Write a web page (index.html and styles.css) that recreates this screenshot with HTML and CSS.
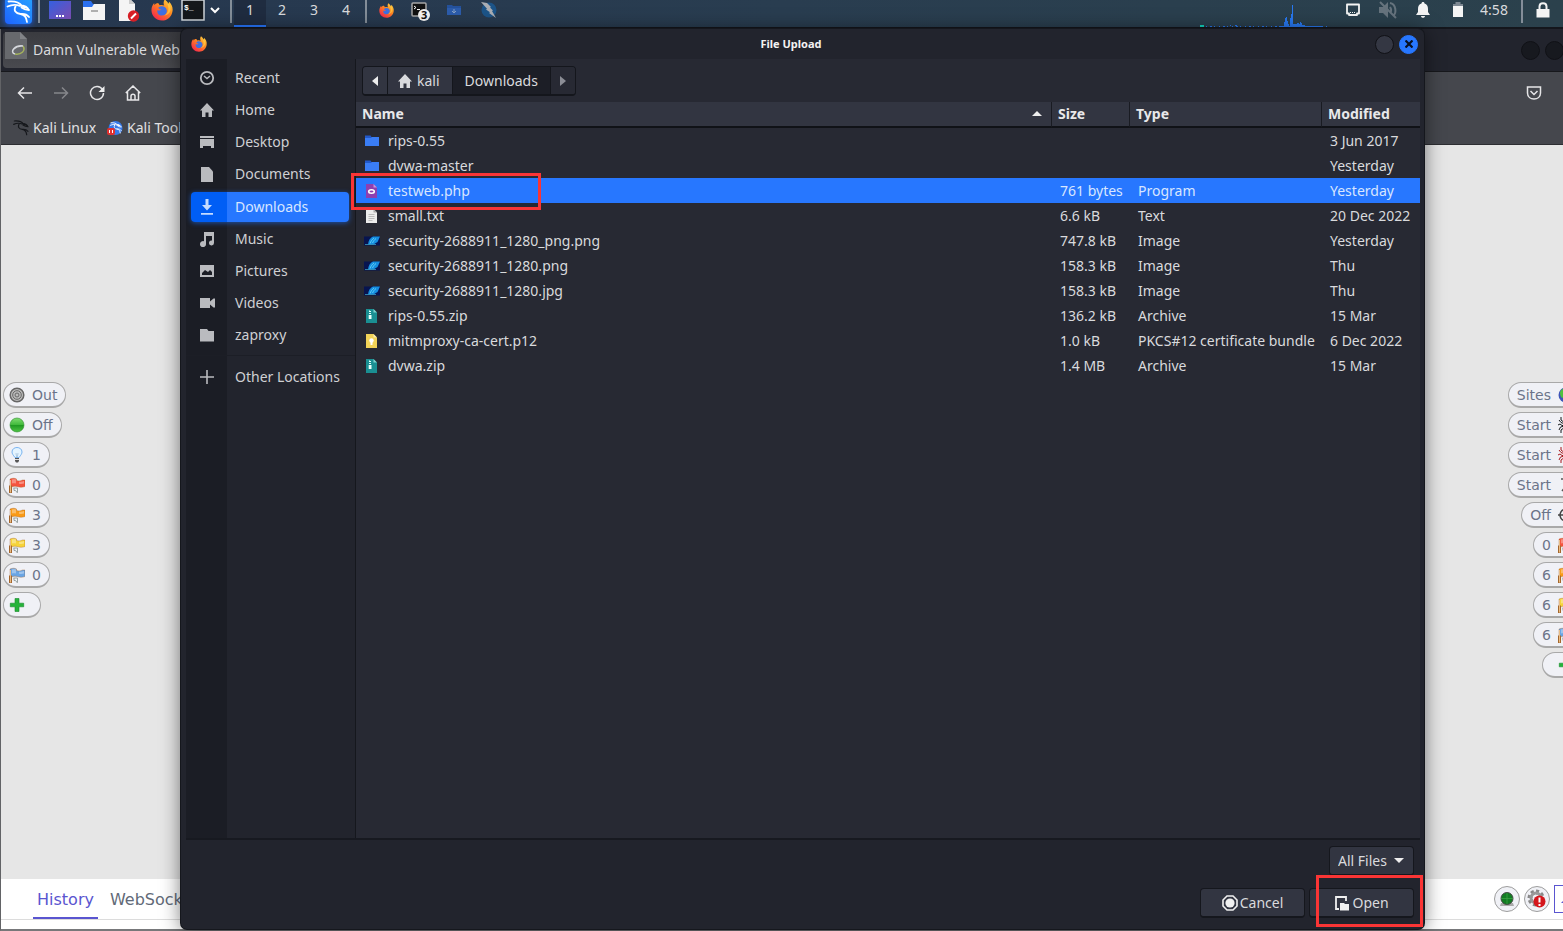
FILE: index.html
```html
<!DOCTYPE html>
<html lang="en">
<head>
<meta charset="utf-8">
<title>File Upload</title>
<link rel="stylesheet" href="styles.css">
</head>
<body>
<svg class="defs" aria-hidden="true">
  <defs>
    <linearGradient id="gFox" x1="1" y1="0" x2="0.2" y2="1"><stop offset="0" stop-color="#ffe14a"/><stop offset=".45" stop-color="#ff8a1f"/><stop offset="1" stop-color="#f5224f"/></linearGradient>
    <linearGradient id="gDesk" x1="0" y1="0" x2="1" y2="1"><stop offset="0" stop-color="#3560e0"/><stop offset="1" stop-color="#7a4bb0"/></linearGradient>
    <linearGradient id="gKali" x1="0" y1="1" x2="1" y2="0"><stop offset="0" stop-color="#1e63ff"/><stop offset="1" stop-color="#25a2ff"/></linearGradient>
    <linearGradient id="gGreen" x1="0" y1="0" x2="0" y2="1"><stop offset="0" stop-color="#7fdc70"/><stop offset=".5" stop-color="#3fb83a"/><stop offset=".52" stop-color="#1f9a22"/><stop offset="1" stop-color="#4fc445"/></linearGradient>
  </defs>
  <symbol id="firefox" viewBox="0 0 24 24">
    <path fill="url(#gFox)" d="M15 .5c2 1.400 3.200 3 3.500 5 1-.7 1.200-1.800 1-2.700C22.500 5.500 24 9 23.500 13 22.700 19.300 18 23.500 12 23.500 5.500 23.500.6 18.500.5 12.300.5 9 1.700 6.300 3.500 4.400c0 1 .1 1.600.5 2.200C5 5.200 6.500 4.400 8 4.500L9.500 6.800c1.500-.6 3.500-.5 5 .4C13.300 5 13.600 2.300 15 .5z"/>
    <path fill="#3f6fe0" d="M8 9.500c1.500-1.800 5-2.300 7.300-.6 2.700 2 2.600 6 .2 7.900-2.500 2-6.500 1.600-8-1-.8-1.400-.7-2.600-.2-3.800 1.200 1 2.800.6 4.200-.5-1.500.3-3-.6-3.500-2z"/>
    <path fill="#ffd24a" d="M15 1c2 2 3.500 4 3.500 7 1.500 4-.5 8-4 10 5-.5 8-5 6.500-10C19.500 4 17 3 15 1z" opacity=".65"/>
  </symbol>
  <symbol id="dragon" viewBox="0 0 24 24">
    <path fill="none" stroke="currentColor" stroke-width="1.800" stroke-linecap="round" d="M2 1.500c6-.5 11 1 13.500 4.500M1 6.500c4.500-2 9-2 12.500-.5M9 6.500c-2 4 0 7 5 7.500 4 .5 6 3.500 6.500 8M15.500 6c2.500-.5 4.500.5 6 2.500M15 7.500c2 1.500 4 2.500 7.500 2.500M14 14c4-.5 6.500.5 8.500 3"/>
    <path fill="currentColor" d="M13 5l4-.3 5 4-5-.8z"/>
  </symbol>
  <symbol id="house" viewBox="0 0 16 16"><path fill="currentColor" d="M8 1L1 8.500h2V15h3.500v-4.500h3V15H13V8.500h2z"/></symbol>
  <symbol id="folder" viewBox="0 0 16 16"><path fill="#2258c8" d="M1 2.500h5.500l1 1.500H15v5H1z"/><path fill="#3a7df5" d="M1 5h6l1-1h7v9H1z"/></symbol>
  <symbol id="zip" viewBox="0 0 16 16"><path fill="#1a8f92" d="M2 1h7.500L13 4.500V15H2z"/><path fill="#7fd6d2" d="M9.500 1L13 4.500H9.500z"/><path fill="#e9fffb" d="M5 2h1v1h1v1H6v1h1v1H6v1h1.500v4H4.700V7H6V6H5V5h1V4H5V3h1z"/></symbol>
  <symbol id="photo" viewBox="0 0 16 16"><path fill="#071450" d="M0 3.500h16v9H0z"/><path fill="#158de0" d="M4 11.500c.5-4 2-6.500 5-8h7L13.500 9l-4 2.500z"/><path stroke="#6fdcf8" stroke-width=".8" fill="none" d="M6 10.500C7 8 8 6.500 10 5M8.500 10c1-2 2-3.500 3.500-4.500"/><path stroke="#3a9dc4" stroke-width=".8" d="M1 11.500h11"/></symbol>
  <symbol id="flag" viewBox="0 0 16 16">
    <path fill="currentColor" stroke="rgba(150,70,0,.5)" stroke-width=".6" d="M1 2c2-1 5-1 6.500 0v1.500c2 .7 4 .5 6-.5H16v6.500c-2.500 1-5 1-7 .3-2-.8-4-.8-6 0H1z"/>
    <path fill="#fff" opacity=".35" d="M3 2.500c1.500-.5 3-.5 4 0v4c-1.500-.5-3-.4-4 0zM10 4.500c2 .4 3.500.2 5-.4v2.500c-2 .6-3.500.5-5 .2z"/>
    <path stroke="#a5672c" stroke-width="3" d="M1.500 8.500V16"/><path stroke="#e9bd86" d="M1.500 3v12.500"/>
    <path fill="none" stroke="#8f9b98" stroke-width=".9" d="M4.500 11h4v4.500M5 11v2.500h1.500l2 2.500"/>
  </symbol>
  <symbol id="plus" viewBox="0 0 16 16"><path fill="#25b33a" stroke="#148a28" stroke-width=".6" d="M6 1.500h4v4.700h4.700v3.600H10v4.700H6V9.800H1.300V6.200H6z"/></symbol>
  <symbol id="spider" viewBox="0 0 16 16"><ellipse cx="9" cy="8" rx="3" ry="4.500" fill="currentColor"/><path fill="none" stroke="currentColor" d="M3 0v3l4 3M1 3l2 2.500L7 7M0 8l2-1 2 1.500h3M1 13l1.500-3L7 9M3 16v-3l4-3M15 1l-2 2-5 3M15 14l-2-3-5-1"/></symbol>
</svg>

<header class="panel">
  <button class="kali" aria-label="Applications"><svg width="27" height="27" viewBox="0 0 27 27"><rect width="27" height="27" rx="4" fill="url(#gKali)"/><use href="#dragon" x="1" y="3" width="25" height="24"/></svg></button>
  <span class="sep"></span>
  <nav class="launchers">
    <button aria-label="Show desktop"><svg width="24" height="20" viewBox="0 0 24 20"><path fill="url(#gDesk)" d="M1 1h22v18H1z"/><path stroke="#fff" stroke-width="2" stroke-dasharray="2 1" d="M8 16h8"/></svg></button>
    <button aria-label="File manager"><svg width="24" height="24" viewBox="0 0 24 24"><path fill="#2b70ef" d="M1 3h8l2 3h12v5H1z"/><path fill="#f4f4f4" d="M1 9h9l2-3h11v16H1z"/><path stroke="#999" stroke-width="1.500" d="M9 13h7"/></svg></button>
    <button aria-label="Text editor"><svg width="24" height="24" viewBox="0 0 24 24"><path fill="#f4f4f4" d="M3 0h10l6 6v17H3z"/><path fill="#ccc" d="M13 0l6 6h-6z"/><circle cx="17.500" cy="18" r="5.700" fill="#d61f26"/><path stroke="#fff" stroke-width="2" d="M15 20.500l5-5"/></svg></button>
    <button aria-label="Firefox"><svg width="22" height="22"><use href="#firefox"/></svg></button>
    <button class="term" aria-label="Terminal"><svg width="24" height="22" viewBox="0 0 24 22"><path fill="#15181b" stroke="#cfd5da" stroke-width="1.500" d="M1 1h22v20H1z"/><text x="3" y="11" class="prompt">$_</text></svg></button>
    <button class="more" aria-label="More terminals"><svg width="10" height="8" viewBox="0 0 10 8"><path fill="none" stroke="#fff" stroke-width="2" d="M1 2l4 4 4-4"/></svg></button>
  </nav>
  <span class="sep"></span>
  <nav class="spaces"><button class="on">1</button><button>2</button><button>3</button><button>4</button></nav>
  <span class="sep"></span>
  <nav class="tasks">
    <button aria-label="Firefox window"><svg width="15" height="15"><use href="#firefox"/></svg></button>
    <button aria-label="Terminal windows"><svg width="20" height="22" viewBox="0 0 20 22"><rect x="2" y="4" width="14" height="13" rx="1" fill="#111" stroke="#a7a7a7" stroke-width="1.500"/><path fill="none" stroke="#fff" d="M4 7l2 1.500L4 10M7 10.500h3"/><circle cx="14" cy="16" r="6" fill="#f4f4f4"/><text x="11" y="20" class="count">3</text></svg></button>
    <button aria-label="Downloads folder"><svg width="16" height="14" viewBox="0 0 16 14"><path fill="#24519b" d="M1 2h5l1 1h8v9H1z"/><path fill="#2c5cab" d="M1 5h14v7H1z"/><path fill="none" stroke="#86a0c4" d="M8 6v4M6 8l2 2 2-2"/></svg></button>
    <button aria-label="ZAP"><svg width="17" height="18" viewBox="0 0 17 18"><circle cx="9" cy="9" r="7.500" fill="#1c5488"/><path fill="#a9adb3" d="M1 1l6 1 4 4-1 .5 3 3-1 .5 4 7-7-5 1-.8-4-2.700 1-.8z"/></svg></button>
  </nav>
  <div class="tray">
    <svg class="graph" width="132" height="27" viewBox="0 0 132 27"><path fill="#12d6c0" d="M5 25h4v2H5z"/><path stroke="#2878f0" stroke-width="1" stroke-dasharray="1 3 2 2 1 4" d="M11 26.500h76"/><path fill="#2878f0" d="M35 25h1v1h-1zM40 25h2v1h-2zM84 26h5v-4h1v-4h1v-1h1v4h1v3h1v2h1v-8h1v-4h1V5h1v19h4v-1h2v1h1v-2h1v1h1v2h3v1h18v1H84zM131 26h1v1h-1z"/></svg>
    <button aria-label="Network"><svg width="16" height="14" viewBox="0 0 16 14"><path fill="none" stroke="#f4f4f4" stroke-width="1.800" stroke-linejoin="round" d="M2 1.500h12v9h-2V12H4v-1.500H2z"/><path stroke="#f4f4f4" stroke-dasharray="1 1" d="M5 9.500h6"/></svg></button>
    <button aria-label="Sound muted"><svg width="20" height="18" viewBox="0 0 20 18"><g stroke="#66737d" fill="none" stroke-width="2"><path fill="#66737d" stroke="none" d="M1 6h4l5-5v16l-5-5H1z"/><path d="M12 6c1.500 2 1.500 4 0 6M12 2c6 1 7 10 3 13M2 1l16 16"/></g></svg></button>
    <button aria-label="Notifications"><svg width="16" height="16" viewBox="0 0 16 16"><path fill="#f4f4f4" d="M8 0c1 0 1.500.6 1.500 1.500C12 2.200 13 4 13 7v3l2 3H1l2-3V7c0-3 1-4.800 3.500-5.500C6.500.6 7 0 8 0zM6 14h4c0 1-.8 1.800-2 1.800S6 15 6 14z"/></svg></button>
    <button aria-label="Battery"><svg width="12" height="16" viewBox="0 0 12 16"><path fill="#7c8791" d="M3.500 0h5v2H11v3H1V2h2.500z"/><path fill="#f4f4f4" d="M1 4h10v11H1z"/></svg></button>
    <time>4:58</time>
    <span class="sep"></span>
    <button class="lock" aria-label="Lock"><svg width="14" height="16" viewBox="0 0 14 16"><path fill="#f4f4f4" d="M.5 7h13v8.500H.5z"/><path fill="none" stroke="#f4f4f4" stroke-width="2" d="M3.500 8V4.500c0-4.500 7-4.500 7 0V8"/></svg></button>
  </div>
</header>

<main class="browser">
  <div class="tabs">
    <div class="tab"><svg width="24" height="30" viewBox="0 0 24 30"><path fill="#67696d" d="M0 0h15l7 7v20H0z"/><path fill="#818387" d="M15 0l7 7h-7z"/><path fill="none" stroke="#a3b25c" stroke-width="1.500" d="M18 14c3 5-2 9-8 8"/><path fill="none" stroke="#d5d8dc" stroke-width="1.500" d="M10 22c-6-2 0-9 8-8"/></svg>Damn Vulnerable Web</div>
    <div class="wm"><button aria-label="Minimize"></button><button aria-label="Maximize"></button></div>
  </div>
  <div class="toolbar">
    <div class="nav">
      <button aria-label="Back"><svg viewBox="0 0 16 16"><path d="M15 8H2M7 2.500L1.500 8 7 13.500"/></svg></button>
      <button class="dim" aria-label="Forward"><svg viewBox="0 0 16 16"><path d="M1 8h13M9 2.500L14.500 8 9 13.500"/></svg></button>
      <button aria-label="Reload"><svg viewBox="0 0 16 16"><path d="M13.500 4.500A6.500 6.500 0 1 0 14.500 8"/><path fill="#eee" stroke="none" d="M15.500 1v6h-6z"/></svg></button>
      <button aria-label="Home"><svg viewBox="0 0 16 16"><path d="M.8 8L8 1l7.200 7M2.500 7v8h11V7M6 15v-4c0-2.500 4-2.500 4 0v4"/></svg></button>
      <button class="pocket" aria-label="Save to Pocket"><svg viewBox="0 0 16 16"><path d="M1.500 2h13v6c0 8-13 8-13 0zM4.500 6L8 9.500 11.500 6"/></svg></button>
    </div>
    <div class="marks">
      <a href="#"><svg class="black" width="16" height="16"><use href="#dragon"/></svg>Kali Linux</a>
      <a href="#"><svg width="16" height="16" viewBox="0 0 16 16"><circle cx="8.500" cy="8" r="7" fill="#3679e8"/><use href="#dragon" x="3" y="2" width="12" height="12"/><rect y="8" width="8" height="7" rx="2" fill="#e13030"/><path stroke="#fff" d="M2.500 10v3M5.500 10v3"/></svg>Kali Tools</a>
    </div>
  </div>
  <div class="page">
    <div class="hud">
      <div class="pills">
        <button><svg viewBox="0 0 16 16"><circle cx="8" cy="8" r="7" fill="#bbb"/><g fill="none" stroke="#666"><circle cx="8" cy="8" r="6.800" stroke-width="1.500"/><circle cx="8" cy="8" r="4.300"/><circle cx="8" cy="8" r="2"/></g></svg>Out</button>
        <button><svg viewBox="0 0 16 16"><circle cx="8" cy="8" r="7" fill="url(#gGreen)" stroke="#2b8b2b" stroke-width=".6"/></svg>Off</button>
        <button><svg viewBox="0 0 16 16"><path fill="#e4f4ff" stroke="#79b4f0" d="M6 10.500C4 8 3 6.500 3 5c0-6 10-6 10 0 0 1.500-1 3-3 5.500z"/><path stroke="#8aaed0" stroke-width=".6" fill="none" d="M7 6l.6 4M9 6l-.6 4"/><path fill="#555" d="M6 11h4v3l-1 1.500H7L6 14z"/><path stroke="#ddd" d="M6 12.500h4"/></svg>1</button>
        <button><svg class="red"><use href="#flag"/></svg>0</button>
        <button><svg class="orange"><use href="#flag"/></svg>3</button>
        <button><svg class="yellow"><use href="#flag"/></svg>3</button>
        <button><svg class="blue"><use href="#flag"/></svg>0</button>
        <button aria-label="Add tool"><svg><use href="#plus"/></svg><span></span></button>
      </div>
      <div class="pills right">
        <button>Sites<svg viewBox="0 0 16 16"><circle cx="8" cy="8" r="7.500" fill="#3d54b8"/><path fill="#4fc13e" d="M2 5c2-4 5-4 6-3L5 6l1 4-2 1C2 9 2 7 2 5z"/></svg></button>
        <button>Start<svg class="black"><use href="#spider"/></svg></button>
        <button>Start<svg class="crimson"><use href="#spider"/></svg></button>
        <button>Start<svg viewBox="0 0 16 16"><path fill="none" stroke="#555" stroke-width="1.500" d="M3 2h5l5 6M8 9l-4 5M9 4l4 2"/></svg></button>
        <button>Off<svg viewBox="0 0 16 16"><path fill="none" stroke="#444" stroke-width="1.500" d="M0 8h16M8 0v16M8 2a6 6 0 1 0 .1 0"/></svg></button>
        <button>0<svg class="red"><use href="#flag"/></svg></button>
        <button>6<svg class="orange"><use href="#flag"/></svg></button>
        <button>6<svg class="yellow"><use href="#flag"/></svg></button>
        <button>6<svg class="blue"><use href="#flag"/></svg></button>
        <button aria-label="Add tool"><span></span><svg><use href="#plus"/></svg></button>
      </div>
    </div>
    <div class="drawer">
      <a class="active" href="#">History</a><a href="#">WebSockets</a>
      <div class="status">
        <button class="round" aria-label="Radar"><svg width="16" height="16" viewBox="0 0 16 16"><path fill="#aaa" d="M2 12h12l1 3H1z"/><circle cx="8" cy="7.500" r="6" fill="#117d22" stroke="#444"/><path fill="none" stroke="#3fa548" stroke-width=".7" d="M2 7.500h12M8 1.500v12"/></svg></button>
        <button class="round" aria-label="Errors"><svg width="20" height="20" viewBox="0 0 20 20"><circle cx="9" cy="9" r="6" fill="none" stroke="#888" stroke-width="5" stroke-dasharray="2.600 2"/><circle cx="9" cy="9" r="5" fill="none" stroke="#999" stroke-width="3"/><circle cx="12.500" cy="12.500" r="6" fill="#d4161c"/><path stroke="#fff" stroke-width="2" d="M12.500 8.500v5M12.500 15v2"/></svg></button>
        <button class="box" aria-label="Toggle HUD"><svg width="16" height="16" viewBox="0 0 16 16"><path fill="#5a55d0" d="M6 12l5-5v5z"/></svg></button>
      </div>
    </div>
  </div>
</main>

<section class="dialog" role="dialog" aria-labelledby="dlg-title">
  <div class="titlebar">
    <svg width="16" height="16"><use href="#firefox"/></svg>
    <h1 id="dlg-title">File Upload</h1>
    <div class="wm"><button class="grey" aria-label="Maximize"></button><button class="close" aria-label="Close"><svg width="8" height="8" viewBox="0 0 8 8"><path stroke="#071022" stroke-width="2.200" d="M.5.5l7 7M7.500.5l-7 7"/></svg></button></div>
  </div>
  <div class="body">
    <nav class="places">
      <a href="#"><svg viewBox="0 0 16 16"><circle cx="8" cy="8" r="6.200" fill="none" stroke="currentColor" stroke-width="1.800"/><path fill="none" stroke="currentColor" stroke-width="1.500" d="M5 6l3 2.500L11 6"/></svg>Recent</a>
      <a href="#"><svg><use href="#house"/></svg>Home</a>
      <a href="#"><svg viewBox="0 0 16 16"><path fill="currentColor" d="M1 2h14v2H1zM1 5h14v9h-3v-2H4v2H1z"/></svg>Desktop</a>
      <a href="#"><svg viewBox="0 0 16 16"><path fill="currentColor" d="M2 1h8l4 4.500V16H2z"/></svg>Documents</a>
      <a class="active" href="#"><svg viewBox="0 0 16 16"><path fill="currentColor" d="M6.500 0h3v6H13L8 11.500 3 6h3.500zM2 14h12v1.800H2z"/></svg>Downloads</a>
      <a href="#"><svg viewBox="0 0 16 16"><path fill="currentColor" d="M5 1h10v11a2.500 2.500 0 1 1-2-2.500V5H7v8a3 3 0 1 1-2-2.700z"/></svg>Music</a>
      <a href="#"><svg viewBox="0 0 16 16"><path fill="currentColor" fill-rule="evenodd" d="M1 2h14v12H1zM3 12h10V9l-2-2-2 2-3-2-3 3z"/></svg>Pictures</a>
      <a href="#"><svg viewBox="0 0 16 16"><path fill="currentColor" d="M1 3h10v3.500l3.500-3H16v9h-1.500l-3.500-3V13H1z"/></svg>Videos</a>
      <a href="#"><svg viewBox="0 0 16 16"><path fill="currentColor" d="M1 2h7l1.500 2H15v10.500H1z"/></svg>zaproxy</a>
      <a class="other" href="#"><svg viewBox="0 0 16 16"><path stroke="currentColor" stroke-width="1.600" d="M8 1v14M1 8h14"/></svg>Other Locations</a>
    </nav>
    <div class="files">
      <div class="path">
        <button class="step" aria-label="Previous folder"><svg width="6" height="10" viewBox="0 0 6 10"><path fill="#eee" d="M6 0v10L0 5z"/></svg></button>
        <button><svg width="16" height="16"><use href="#house"/></svg>kali</button>
        <button class="current">Downloads</button>
        <button class="step off" aria-label="Next folder"><svg width="6" height="10" viewBox="0 0 6 10"><path fill="#8b8d95" d="M0 0l6 5-6 5z"/></svg></button>
      </div>
      <table>
        <colgroup><col><col class="c-size"><col class="c-type"><col class="c-mod"></colgroup>
        <thead><tr><th><span class="sort">Name<svg width="10" height="6" viewBox="0 0 10 6"><path fill="#eee" d="M5 0l5 5H0z"/></svg></span></th><th>Size</th><th>Type</th><th>Modified</th></tr></thead>
        <tbody>
          <tr><td><svg><use href="#folder"/></svg>rips-0.55</td><td></td><td></td><td>3 Jun 2017</td></tr>
          <tr><td><svg><use href="#folder"/></svg>dvwa-master</td><td></td><td></td><td>Yesterday</td></tr>
          <tr class="picked"><td><svg viewBox="0 0 16 16"><path fill="#8e3fb0" d="M2 1h7.500L13 4.500V15H2z"/><path fill="#c795dc" d="M9.500 1L13 4.500H9.500z"/><ellipse cx="7.500" cy="8.500" rx="2.800" ry="1.700" fill="none" stroke="#fff" stroke-width="1.600"/></svg>testweb.php</td><td>761 bytes</td><td>Program</td><td>Yesterday</td></tr>
          <tr><td><svg viewBox="0 0 16 16"><path fill="#ececec" d="M2 1h7.500L13 4.500V15H2z"/><path fill="#aaa" d="M9.500 1L13 4.500H9.500z"/><path stroke="#bbb" d="M4.500 6.500h6M4.500 8.500h6M4.500 10.500h6M4.500 12.500h4"/></svg>small.txt</td><td>6.6 kB</td><td>Text</td><td>20 Dec 2022</td></tr>
          <tr><td><svg><use href="#photo"/></svg>security-2688911_1280_png.png</td><td>747.8 kB</td><td>Image</td><td>Yesterday</td></tr>
          <tr><td><svg><use href="#photo"/></svg>security-2688911_1280.png</td><td>158.3 kB</td><td>Image</td><td>Thu</td></tr>
          <tr><td><svg><use href="#photo"/></svg>security-2688911_1280.jpg</td><td>158.3 kB</td><td>Image</td><td>Thu</td></tr>
          <tr><td><svg><use href="#zip"/></svg>rips-0.55.zip</td><td>136.2 kB</td><td>Archive</td><td>15 Mar</td></tr>
          <tr><td><svg viewBox="0 0 16 16"><path fill="#f2d358" d="M2 1h7.500L13 4.500V15H2z"/><path fill="#fbeeb0" d="M9.500 1L13 4.500H9.500z"/><circle cx="7.500" cy="7.500" r="2.200" fill="#fff"/><path fill="#fff" d="M6.500 8h2v4h-2z"/></svg>mitmproxy-ca-cert.p12</td><td>1.0 kB</td><td>PKCS#12 certificate bundle</td><td>6 Dec 2022</td></tr>
          <tr><td><svg><use href="#zip"/></svg>dvwa.zip</td><td>1.4 MB</td><td>Archive</td><td>15 Mar</td></tr>
        </tbody>
      </table>
    </div>
  </div>
  <footer class="actions">
    <div class="filter"><select aria-label="File type"><option>All Files</option></select><svg width="10" height="6" viewBox="0 0 10 6"><path fill="#eee" d="M0 0h10L5 5z"/></svg></div>
    <div class="row">
      <button class="btn"><svg width="16" height="16" viewBox="0 0 16 16"><path fill="none" stroke="#f0f0f0" stroke-width="1.600" d="M5 1h6l4 4v6l-4 4H5l-4-4V5z"/><circle cx="8" cy="8" r="4.600" fill="#f0f0f0"/></svg>Cancel</button>
      <button class="btn"><svg width="16" height="16" viewBox="0 0 16 16"><path fill="none" stroke="#f0f0f0" stroke-width="1.800" d="M5 14H2V2h10v4"/><path fill="#f0f0f0" d="M6 8h4l1 1h4v6.500H6z"/></svg>Open</button>
    </div>
  </footer>
  <div class="mark mark-file"></div>
  <div class="mark mark-open"></div>
</section>
</body>
</html>
```
FILE: styles.css
```css
* { box-sizing: border-box; }
body {
  margin: 0;
  height: 100vh;
  position: relative;
  display: flex;
  flex-direction: column;
  overflow: hidden;
  background: #1c1e27;
  color: #d9dadd;
  font: 14px/20px "Noto Sans", sans-serif;
}
button { margin: 0; padding: 0; border: 0; background: none; color: inherit; font: inherit; }
a { color: inherit; text-decoration: none; }
svg { display: block; flex: none; }
.defs { position: absolute; width: 0; height: 0; }

/* desktop panel */
.panel {
  flex: none;
  display: flex;
  align-items: center;
  height: 36px;
  margin-top: -7px;
  background: linear-gradient(90deg, #26374f, #293d50 50%, #2b414c);
  border-bottom: 2px solid #14161c;
}
.panel button { display: flex; align-items: center; justify-content: center; }
.kali { width: 36px; color: #fff; }
.kali svg { filter: drop-shadow(0 0 3px #1e63ff); }
.sep { width: 9px; height: 26px; border-left: 2px solid #848e99; margin-left: 2px; margin-right: -4px; }
.panel > .sep { margin-right: -5px; }
.kali + .sep { margin-right: -4px; }
.launchers { display: flex; margin-right: 5px; }
.launchers button { width: 34px; height: 26px; }
.launchers .term { width: 28px; }
.launchers .more { width: 16px; }
.prompt { font: bold 8px "Liberation Mono", monospace; fill: #fff; }
.count { font: bold 11px "Noto Sans", sans-serif; fill: #111; }
.spaces { display: flex; align-self: stretch; margin-right: 1px; }
.spaces button { width: 32px; padding-top: 2px; border-bottom: 2px solid transparent; }
.spaces .on { background: #1f2c40; border-color: #2777ff; }
.tasks { display: flex; }
.tasks button { width: 34px; }
.tray { margin-left: auto; display: flex; align-items: center; align-self: stretch; padding-right: 7px; }
.graph { align-self: flex-end; margin-right: 8px; }
.tray button { width: 35px; }
.tray time { width: 38px; text-align: center; }
.tray .sep { margin: 0 0 0 8px; }
.tray .lock { width: 26px; }

/* browser window behind the dialog */
.browser { flex: 1; display: flex; flex-direction: column; min-height: 0; border-left: 1px solid #626366; border-bottom: 2px solid #77787a; background: #22242d; }
.tabs { display: flex; align-items: center; justify-content: space-between; height: 43px; padding-left: 2px; border-bottom: 1px solid #17181c; }
.tab { display: flex; align-items: center; gap: 4px; width: 220px; height: 36px; border-radius: 4px; background: linear-gradient(#3a3b40, #494a4f); white-space: nowrap; padding-left: 2px; }
.tab svg { align-self: flex-start; }
.wm { display: flex; gap: 5px; }
.wm button { width: 19px; height: 19px; border-radius: 50%; background: #17191f; border: 1px solid #101116; }
.tabs .wm { margin-right: -1px; }
.toolbar { height: 73px; background: #45474d; border-bottom: 1px solid #2d2e32; }
.nav { display: flex; align-items: center; height: 42px; padding: 0 21px 0 6px; }
.nav button { width: 36px; display: flex; justify-content: center; }
.nav svg { width: 16px; height: 16px; fill: none; stroke: #e6e6e8; stroke-width: 1.5; }
.nav .dim { opacity: .4; }
.nav .pocket { width: 16px; margin-left: auto; }
.marks { display: flex; gap: 11px; padding: 4px 12px; line-height: 20px; }
.marks a { display: flex; align-items: center; gap: 4px; color: #e2e2e4; }
.marks svg { color: #fff; }
.page { flex: 1; display: flex; flex-direction: column; min-height: 0; background: #e6e6e6; color: #6b7489; font-family: "DejaVu Sans", sans-serif; }
.hud { flex: 1; display: flex; justify-content: space-between; padding: 237px 0 0 2px; }
.pills { display: flex; flex-direction: column; align-items: flex-start; gap: 4px; }
.pills button { display: flex; align-items: center; gap: 7px; height: 26px; padding: 0 8px 0 5px; border: 1px solid #a9a9a9; border-width: 1px 1px 2px; border-radius: 13px; background: #f0f1f6; }
.pills svg { width: 16px; height: 16px; }
.right { align-items: flex-end; margin-right: -17px; }
.right button { padding: 0 5px 0 8px; }
.marks .black, .black { color: #16181c; }
.crimson { color: #a8161c; }
.red { color: #f5553f; }
.orange { color: #f99a17; }
.yellow { color: #f6d33a; }
.blue { color: #6aa5e4; }
.drawer { display: flex; align-items: flex-start; gap: 8px; height: 50px; padding-left: 32px; background: linear-gradient(#dcdcdc, #dcdcdc) 0 40px / 100% 1px no-repeat #fff; font-size: 16px; }
.drawer a { height: 40px; padding: 11px 4px 0; color: #626a78; }
.drawer .active { color: #5a55d0; border-bottom: 2px solid #5a55d0; }
.status { margin-left: auto; display: flex; gap: 4px; padding-top: 7px; margin-right: -21px; }
.round { display: grid; place-items: center; width: 26px; height: 26px; border: 1px solid #9d9d9d; border-radius: 50%; background: #f0f1f6; }
.box { width: 30px; height: 28px; border: 1px solid #5a55d0; background: #fff; margin-top: -1px; }

/* file chooser */
.dialog {
  position: absolute;
  inset: 29px 139px 2px 181px;
  display: flex;
  flex-direction: column;
  padding: 0 4px 0 5px;
  background: #22242d;
  border-radius: 6px;
  box-shadow: 0 0 0 1px #15171d, 0 2px 20px rgba(0, 0, 0, .55);
}
.titlebar { display: flex; align-items: center; height: 30px; padding: 0 2px 0 5px; }
.titlebar h1 { flex: 1; margin: 0; text-align: center; font-size: 11px; line-height: 20px; color: #f2f2f2; }
.dialog .wm .grey { background: #343743; }
.dialog .wm .close { display: grid; place-items: center; background: #2777ff; border-color: #2777ff; }
.body { flex: 1; display: flex; min-height: 0; border-bottom: 2px solid #171920; }
.places { width: 170px; padding-top: 3px; background: linear-gradient(90deg, #1b1d25 41px, #22242d 41px); border-right: 1px solid #15171d; }
.places a { display: flex; align-items: center; height: 32px; padding-left: 13px; gap: 20px; color: #cfd0d3; white-space: nowrap; }
.places svg { width: 16px; height: 16px; color: #babbbf; }
.places .active { margin: 2px 6px 1px 5px; padding-left: 8px; height: 30px; border-radius: 4px; color: #d8e6ff; background: linear-gradient(90deg, #005ef5 36px, #2777ff 36px); box-shadow: 0 1px 5px #1d50a8; }
.places .active svg { color: #c5dcff; }
.places .other { height: 42px; margin-top: 4px; border-top: 1px solid #1c1e26; }
.files { flex: 1; background: #272933; }
.path { display: inline-flex; height: 30px; margin: 7px 6px 6px; border: 1px solid #14161c; border-bottom-width: 2px; border-radius: 4px; overflow: hidden; vertical-align: top; }
.path button { display: flex; align-items: center; gap: 4px; padding: 0 12px 0 9px; background: #323541; border-right: 1px solid #14161c; }
.path .current { padding: 0 12px; background: #1c1e26; }
.path .step { width: 25px; padding: 0; justify-content: center; }
.path .off { width: 24px; background: #272933; border: 0; }
table { width: 100%; border-collapse: separate; border-spacing: 0; table-layout: fixed; white-space: nowrap; }
.c-size { width: 78px; }
.c-type { width: 192px; }
.c-mod { width: 98px; }
th { height: 26px; padding: 0 6px; text-align: left; background: #323541; border-right: 1px solid #191b22; border-bottom: 2px solid #101217; color: #e8e8ea; }
th:last-child { border-right: 0; }
.sort { display: flex; align-items: center; justify-content: space-between; padding-right: 3px; }
td { height: 25px; padding: 0 0 0 8px; line-height: 20px; }
td:first-child { display: flex; align-items: center; gap: 8px; }
td svg { width: 16px; height: 16px; }
.picked td { background: #2777ff; color: #d8e6ff; }
.actions { display: flex; flex-direction: column; align-items: flex-end; gap: 12px; height: 89px; padding: 6px 6px 0 0; }
.filter { position: relative; }
.filter select { appearance: none; height: 30px; padding: 0 26px 0 8px; }
.filter svg { position: absolute; right: 10px; top: 12px; pointer-events: none; }
.filter select, .btn { border: 1px solid #15171d; border-bottom-width: 2px; border-radius: 4px; background: #323541; color: #d9dadd; font: inherit; }
.row { display: flex; gap: 4px; }
.btn { display: flex; align-items: center; justify-content: center; gap: 2px; width: 105px; height: 30px; }
.mark { position: absolute; border: 3px solid #fa3535; }
.mark-file { left: 170px; top: 144px; width: 190px; height: 37px; }
.mark-open { right: 1px; bottom: 2px; width: 107px; height: 52px; }
```
